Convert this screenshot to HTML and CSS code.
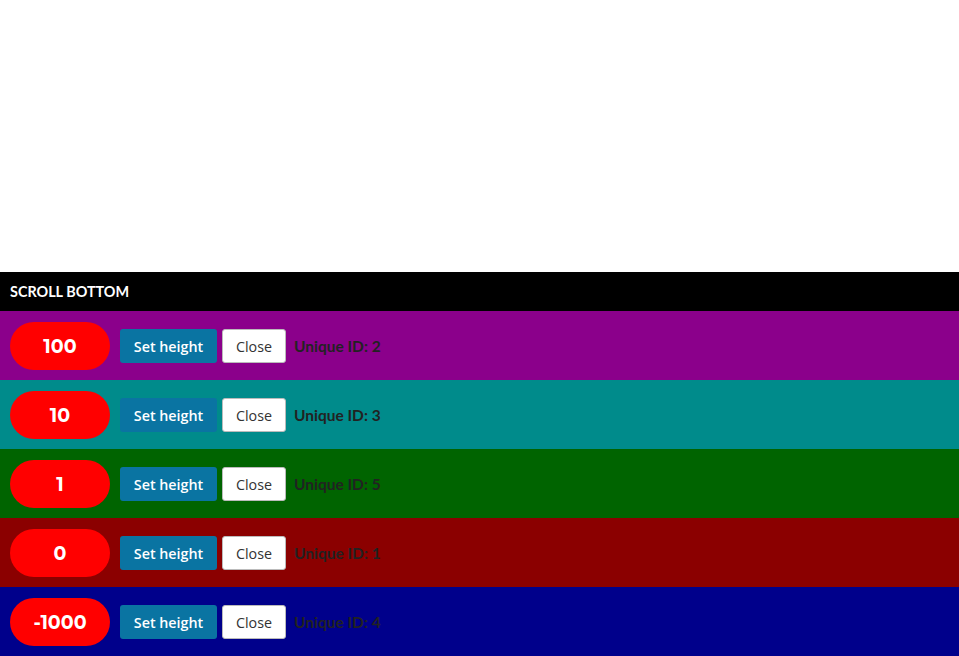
FILE: index.html
```html
<!DOCTYPE html>
<html>
<head>
<meta charset="utf-8">
<link rel="stylesheet" href="styles.css">
</head>
<body>
<div class="page">
  <div class="spacer"></div>
  <div class="header">SCROLL BOTTOM</div>
  <div class="row purple">
    <div class="pill">100</div>
    <button class="btn primary">Set height</button>
    <button class="btn close">Close</button>
    <span class="uid">Unique ID: 2</span>
  </div>
  <div class="row teal">
    <div class="pill">10</div>
    <button class="btn primary">Set height</button>
    <button class="btn close">Close</button>
    <span class="uid">Unique ID: 3</span>
  </div>
  <div class="row green">
    <div class="pill">1</div>
    <button class="btn primary">Set height</button>
    <button class="btn close">Close</button>
    <span class="uid">Unique ID: 5</span>
  </div>
  <div class="row red">
    <div class="pill">0</div>
    <button class="btn primary">Set height</button>
    <button class="btn close">Close</button>
    <span class="uid">Unique ID: 1</span>
  </div>
  <div class="row blue">
    <div class="pill">-1000</div>
    <button class="btn primary">Set height</button>
    <button class="btn close">Close</button>
    <span class="uid">Unique ID: 4</span>
  </div>
</div>
</body>
</html>
```
FILE: styles.css
```css
html, body { margin: 0; padding: 0; }
body { font-family: "Lato", "Open Sans", sans-serif; background: #fff; }
.page { height: 656px; display: flex; flex-direction: column; }
.spacer { flex: 1; }
.header {
  height: 39px; background: #000; color: #fff;
  font-weight: 700; font-size: 14.4px;
  display: flex; align-items: center; padding-left: 10px;
}
.row {
  height: 69px; box-sizing: border-box;
  display: flex; align-items: center;
  padding: 0 10px;
}
.purple { background: #8b008b; }
.teal { background: #008b8b; }
.green { background: #006400; }
.red { background: #8b0000; }
.blue { background: #00008b; }
.pill {
  width: 100px; height: 48px; border-radius: 24px;
  background: #ff0000; color: #fff;
  font-family: "Montserrat", "Open Sans", sans-serif; font-weight: 700; font-size: 19px;
  display: flex; align-items: center; justify-content: center;
  margin-right: 10px; margin-top: 1px;
}
.btn {
  height: 34px; box-sizing: border-box;
  font-family: "Open Sans", sans-serif; font-size: 14.3px;
  border-radius: 3px; cursor: pointer; padding: 1px 0 0 0;
  margin-top: 1px;
}
.primary {
  width: 97px; background: #0a74a2; color: #fff; border: none; font-weight: 600;
}
.close {
  width: 64px; background: #fff; color: #333; border: 1px solid #bbb; margin-left: 5px;
}
.uid {
  margin-left: 8px; font-weight: 700; font-size: 15.5px; color: #222;
}
```
